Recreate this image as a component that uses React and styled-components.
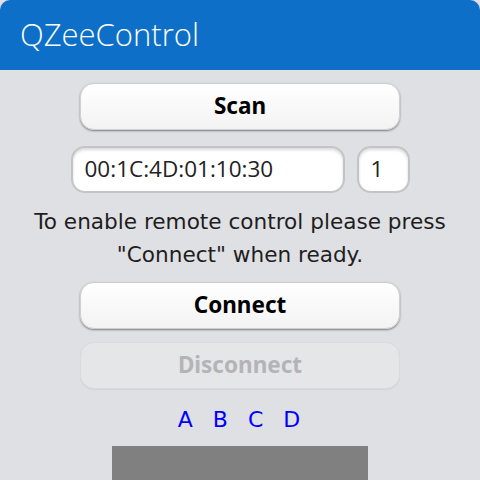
import React, { useState } from 'react';
import styled, { createGlobalStyle } from 'styled-components';

const GlobalStyle = createGlobalStyle`
  html, body { margin: 0; padding: 0; background: #dfe0e3; }
  body { width: 480px; height: 480px; overflow: hidden; }
`;

const Page = styled.div`
  width: 480px;
  height: 480px;
  background: #dfe0e3;
  display: flex;
  flex-direction: column;
  overflow: hidden;
`;

const TitleBar = styled.div`
  height: 70px;
  flex-shrink: 0;
  background: #0d6fc7;
  border-radius: 10px 10px 0 0;
  display: flex;
  align-items: center;
  padding-left: 20px;
  color: #ffffff;
  font-family: "Open Sans", "Noto Sans", sans-serif;
  font-weight: 300;
  font-size: 31px;
  padding-bottom: 2px;
  box-sizing: border-box;
`;

const Content = styled.div`
  display: flex;
  flex-direction: column;
  align-items: center;
  padding-top: 13px;
`;

const Button = styled.button`
  width: 320px;
  height: 47px;
  border-radius: 14px;
  font-family: "Noto Sans", "Open Sans", sans-serif;
  font-weight: 700;
  font-size: 22.5px;
  color: ${p => (p.disabled ? '#b4b4b6' : '#000000')};
  background: ${p => (p.disabled ? '#e5e6e8' : 'linear-gradient(#ffffff, #f3f3f3)')};
  border: 1px solid ${p => (p.disabled ? '#dadbdd' : '#cfcfcf')};
  box-shadow: ${p => (p.disabled ? '0 1px 1px rgba(0,0,0,0.06)' : '0 1px 2px rgba(0,0,0,0.45)')};
  margin-top: ${p => p.$top || 0}px;
  padding: 0 0 3px;
  cursor: pointer;
`;

const FieldRow = styled.div`
  display: flex;
  gap: 12px;
  margin-top: 16px;
`;

const Field = styled.input`
  width: ${p => p.$w}px;
  height: 47px;
  box-sizing: border-box;
  border-radius: 14px;
  border: 2px solid #c4c4c4;
  background: #ffffff;
  box-shadow: inset 0 2px 3px rgba(0,0,0,0.15);
  font-family: "Open Sans", "Noto Sans", sans-serif;
  font-size: 22.5px;
  color: #222;
  padding: 0 0 2px 12px;
  outline: none;
`;

const Message = styled.p`
  margin: 12px 0 0;
  font-family: "DejaVu Sans", sans-serif;
  font-size: 21.6px;
  line-height: 33px;
  color: #1e1e1e;
  text-align: center;
`;

const Letters = styled.div`
  display: flex;
  gap: 20px;
  margin-top: 18px;
  font-family: "DejaVu Sans", sans-serif;
  font-size: 22px;
  color: #0000ff;
  margin-right: 2px;
`;

const Pad = styled.div`
  width: 256px;
  height: 60px;
  background: #808080;
  margin-top: 14px;
`;

export default function App() {
    const [addr, setAddr] = useState('00:1C:4D:01:10:30');
    const [chan, setChan] = useState('1');

    return (
        <Page>
            <GlobalStyle />
            <TitleBar>QZeeControl</TitleBar>
            <Content>
                <Button>Scan</Button>
                <FieldRow>
                    <Field $w={274} value={addr} onChange={e => setAddr(e.target.value)} />
                    <Field $w={53} value={chan} onChange={e => setChan(e.target.value)} />
                </FieldRow>
                <Message>
                    To enable remote control please press<br />
                    "Connect" when ready.
                </Message>
                <Button $top={11}>Connect</Button>
                <Button $top={13} disabled>Disconnect</Button>
                <Letters>
                    <span>A</span>
                    <span>B</span>
                    <span>C</span>
                    <span>D</span>
                </Letters>
                <Pad />
            </Content>
        </Page>
    );
}
